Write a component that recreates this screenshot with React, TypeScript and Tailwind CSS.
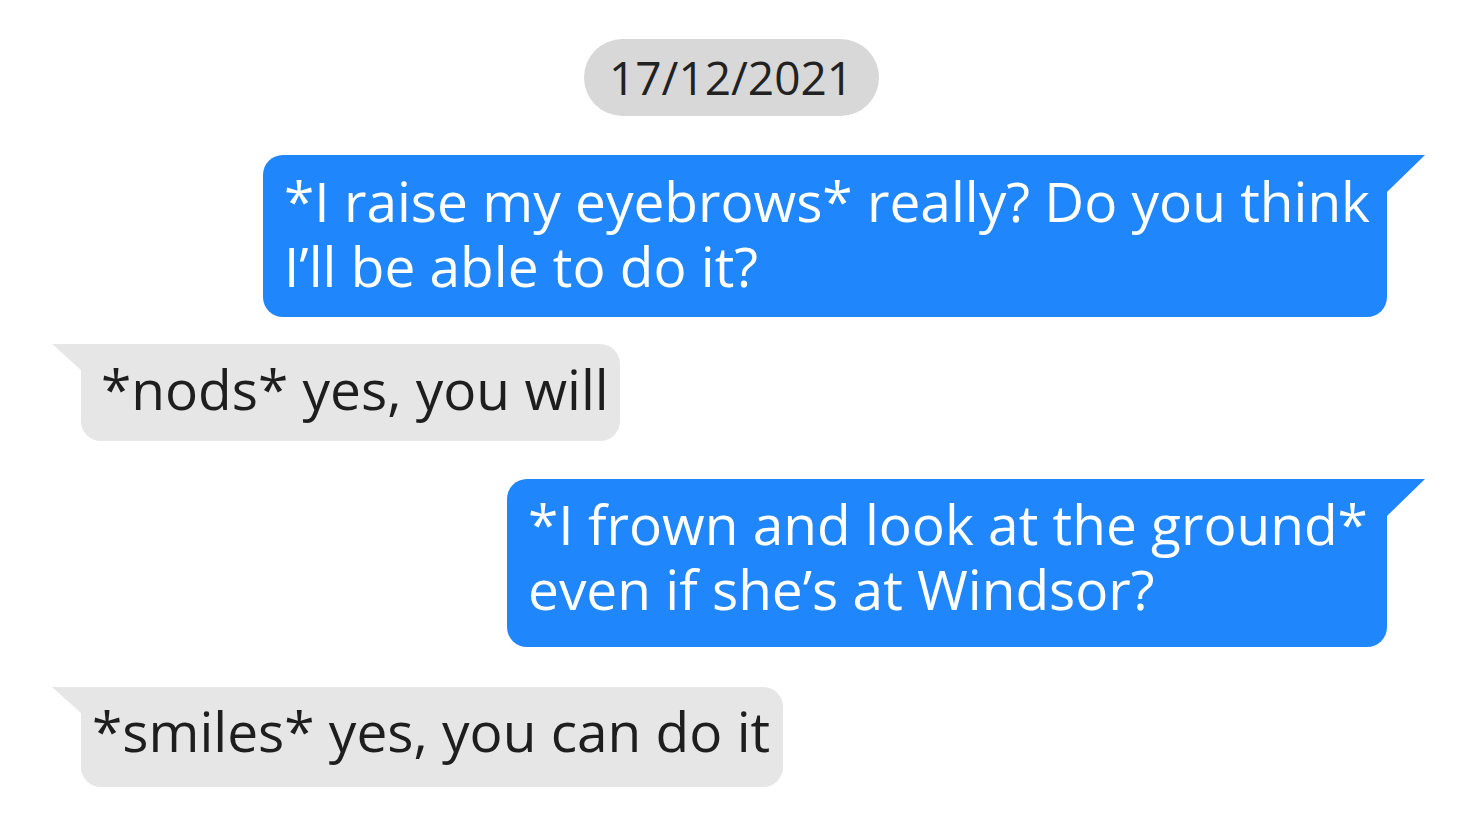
import React from 'react';

type Msg = {
  from: 'me' | 'them';
  lines: string[];
  box: string;
};

const messages: Msg[] = [
  {
    from: 'me',
    lines: ['*I raise my eyebrows* really? Do you think', 'I’ll be able to do it?'],
    box: 'w-[1124px] pl-[21px] pt-[13px] pb-[19px] mt-[39px]',
  },
  {
    from: 'them',
    lines: ['*nods* yes, you will'],
    box: 'w-[539px] pl-[20px] pt-[12px] pb-[20px] mt-[27px]',
  },
  {
    from: 'me',
    lines: ['*I frown and look at the ground*', 'even if she’s at Windsor?'],
    box: 'w-[880px] pl-[21px] pt-[12px] pb-[26px] mt-[38px]',
  },
  {
    from: 'them',
    lines: ['*smiles* yes, you can do it'],
    box: 'w-[702px] pl-[11px] pt-[11px] pb-[24px] mt-[40px]',
  },
];

const Bubble: React.FC<{ msg: Msg }> = ({ msg }) => {
  const mine = msg.from === 'me';
  return (
    <div className={mine ? 'flex justify-end pr-[75px]' : 'flex justify-start pl-[81px]'}>
      <div
        className={
          mine
            ? `relative rounded-[20px] rounded-tr-none bg-[#1f86fb] text-white ${msg.box}`
            : `relative rounded-[20px] rounded-tl-none bg-[#e6e6e6] text-[#1e1e1e] ${msg.box}`
        }
      >
        {mine ? (
          <svg className="absolute top-0 -right-[38px] w-[38px] h-[37px]" viewBox="0 0 38 37">
            <polygon points="0,0 38,0 0,37" fill="#1f86fb" />
          </svg>
        ) : (
          <svg className="absolute top-0 -left-[29px] w-[29px] h-[26px]" viewBox="0 0 29 26">
            <polygon points="0,0 29,0 29,26" fill="#e6e6e6" />
          </svg>
        )}
        <p className="text-[55px] leading-[65px] whitespace-nowrap">
          {msg.lines.map((l, i) => (
            <React.Fragment key={i}>
              {i > 0 && <br />}
              {l}
            </React.Fragment>
          ))}
        </p>
      </div>
    </div>
  );
};

export default function App() {
  return (
    <div className="min-h-[820px] w-full bg-white pt-[39px] font-['Open_Sans',sans-serif]">
      <div className="flex justify-center">
        <div className="flex h-[77px] w-[295px] items-center justify-center rounded-full bg-[#d8d8d8] text-[46px] text-[#222]">
          17/12/2021
        </div>
      </div>
      {messages.map((m, i) => (
        <Bubble key={i} msg={m} />
      ))}
    </div>
  );
}
